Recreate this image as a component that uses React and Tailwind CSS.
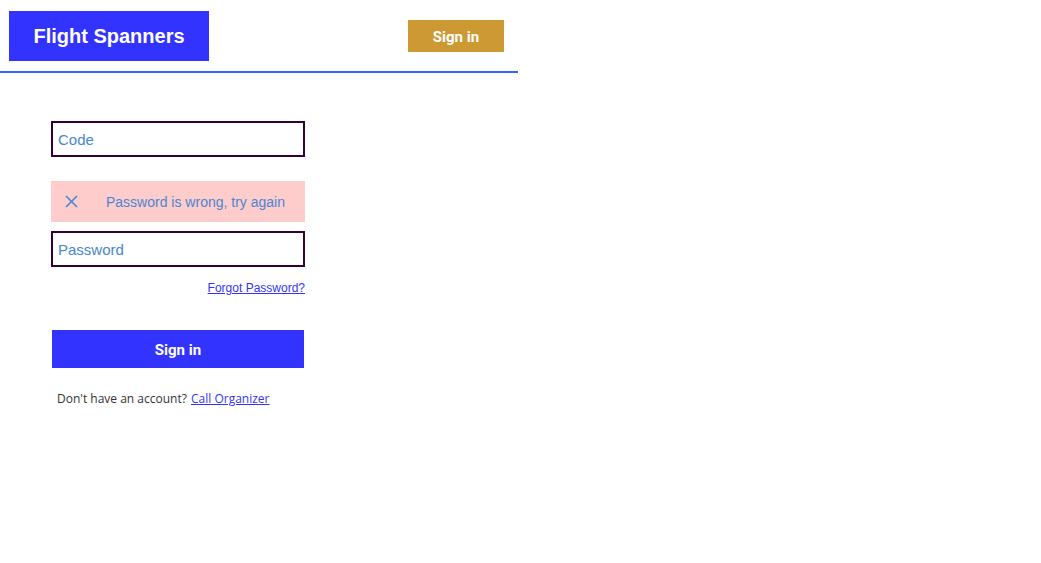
import React from "react";

function Header() {
  return (
    <header className="w-[518px] h-[73px] border-b-2 border-[#3366ff] flex items-start justify-between pl-[9px] pr-[14px]">
      <div className="mt-[11px] w-[200px] h-[50px] bg-[#3333ff] flex items-center justify-center">
        <span className="text-white font-bold text-[20px] font-['Liberation_Sans',Arial,sans-serif]">
          Flight Spanners
        </span>
      </div>
      <button className="mt-[20px] w-[96px] h-[32px] pt-[2px] bg-[#cc9933] text-white font-bold text-[15px] font-['Roboto',sans-serif]">
        Sign in
      </button>
    </header>
  );
}

function LoginForm() {
  return (
    <div className="ml-[51px] mt-[48px] w-[254px] flex flex-col font-['Liberation_Sans',Arial,sans-serif]">
      <input
        placeholder="Code"
        className="h-[36px] border-2 border-[#330033] px-[5px] text-[15px] placeholder:text-[#4a86d0] outline-none"
      />
      <div className="mt-[24px] h-[41px] bg-[#ffcccc] flex items-center text-[#4a86d0] text-[14px]">
        <svg width="13" height="13" viewBox="0 0 13 13" className="ml-[14px]" stroke="#4a86d0" strokeWidth="1.6">
          <line x1="1" y1="1" x2="12" y2="12" />
          <line x1="12" y1="1" x2="1" y2="12" />
        </svg>
        <span className="ml-[28px] mt-[2px]">Password is wrong, try again</span>
      </div>
      <input
        type="password"
        placeholder="Password"
        className="mt-[9px] h-[36px] border-2 border-[#330033] px-[5px] text-[15px] placeholder:text-[#4a86d0] outline-none"
      />
      <div className="mt-[14px] flex justify-end">
        <a href="#" className="text-[12px] text-[#3333ff] underline leading-[14px]">
          Forgot Password?
        </a>
      </div>
      <button className="mt-[35px] mx-[1px] h-[38px] pt-[2px] bg-[#3333ff] text-white font-bold text-[15px] font-['Roboto',sans-serif]">
        Sign in
      </button>
      <p className="mt-[23px] ml-[6px] text-[12px] text-[#333333] font-['Open_Sans',sans-serif] leading-[16px]">
        Don't have an account?{" "}
        <a href="#" className="ml-[1px] text-[#3333ff] underline">
          Call Organizer
        </a>
      </p>
    </div>
  );
}

export default function App() {
  return (
    <div className="w-[1041px] h-[563px] bg-white">
      <Header />
      <LoginForm />
    </div>
  );
}
